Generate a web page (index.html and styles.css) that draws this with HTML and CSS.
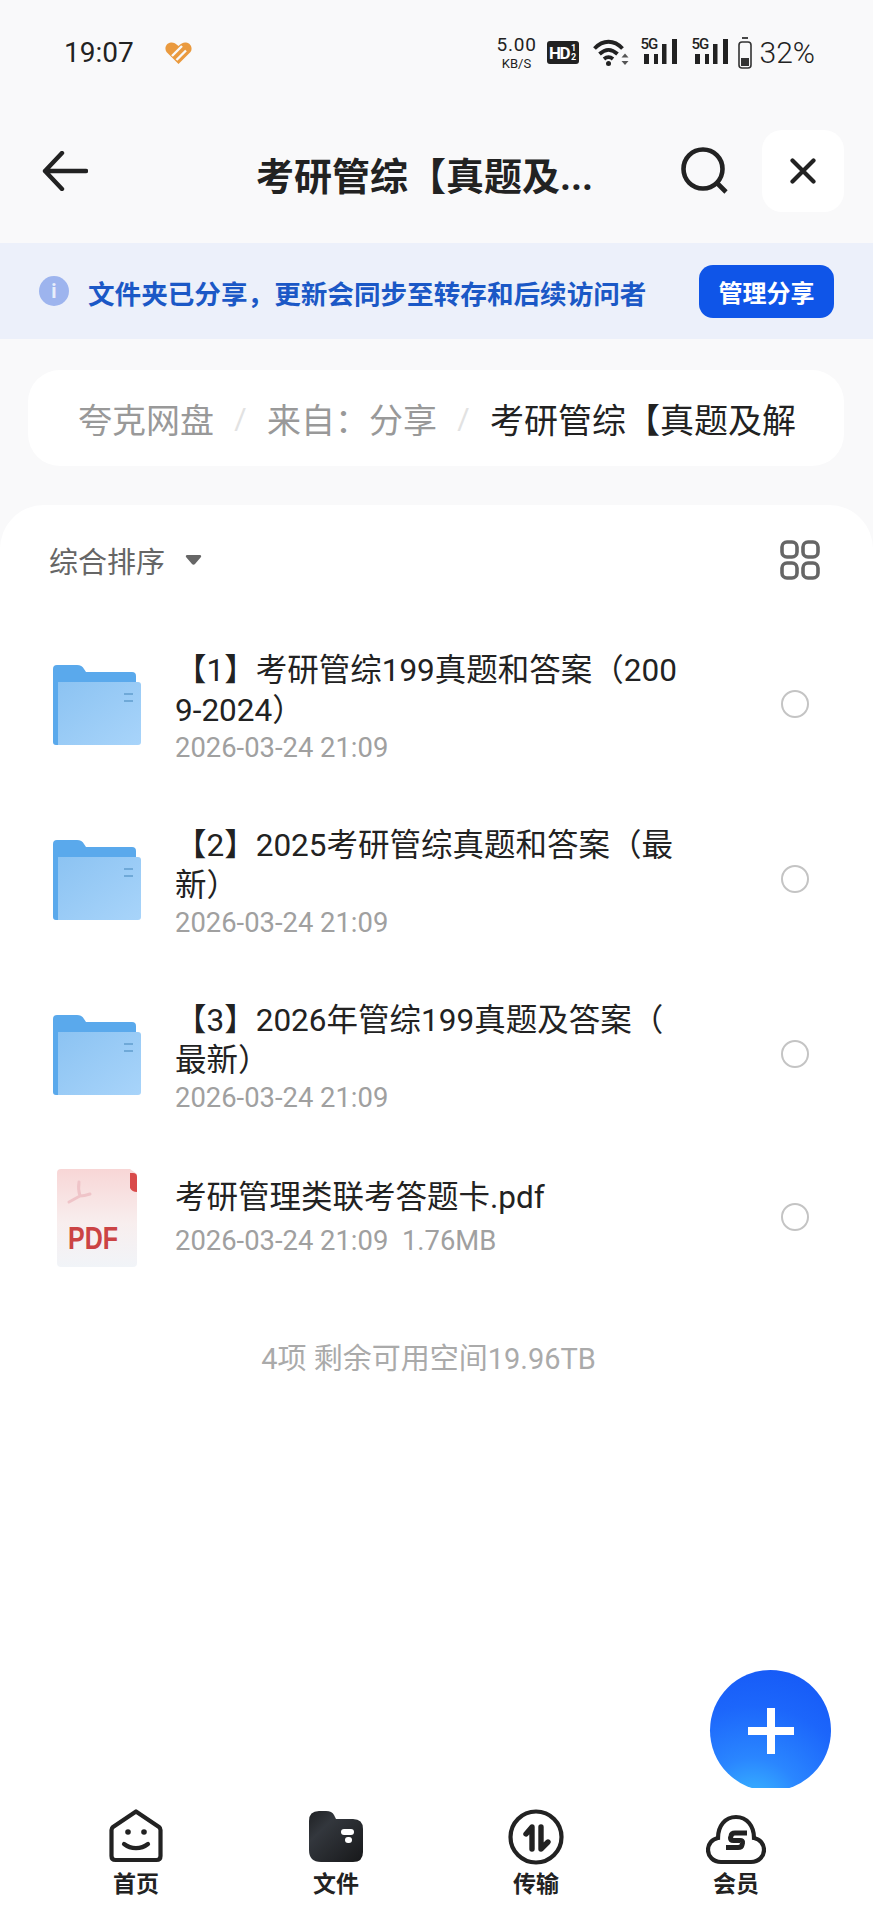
FILE: index.html

```html
<!DOCTYPE html>
<html lang="zh-CN">
<head>
  <meta charset="UTF-8">
  <meta name="viewport" content="width=device-width, initial-scale=1.0">
  <title>考研管综【真题及解</title>
  <link rel="stylesheet" href="styles.css">
</head>
<body>
  <div class="phone">
    <div class="statusbar">
      <div class="status-left">
        <span class="time">19:07</span>
        <svg class="heart" width="27" height="22" viewBox="0 0 27 22">
          <path d="M13.500 22L1.500 10C-1 6.500 1 1 6 .6c2.500-.2 4.500 .8 7.500 3.400C16 1.500 18.500 .2 21 .6c5 .6 7 6 4.500 9.400z" fill="#ea9a3e"/>
          <path d="M7 14L17 4M11.500 18L21 8.500" stroke="#f8f9fa" stroke-width="2.400"/>
        </svg>
      </div>
      <div class="status-right">
        <div class="speed"><span class="speed-num">5.00</span><span class="speed-unit">KB/S</span></div>
        <div class="hd">HD<span class="hd-sub">1<br>2</span></div>
        <svg class="wifi" width="36" height="27" viewBox="0 0 36 27">
          <path d="M1.500 9.500C10 .5 21 .5 29.500 9.500M6.500 15C12.500 9.500 18.500 9.500 24.500 15M11 20C14 17.500 17 17.500 20 20" fill="none" stroke="#222" stroke-width="3.800"/>
          <circle cx="15.500" cy="24.500" r="2.500" fill="#222"/>
          <path d="M32 14.500l3.500 4h-7zM32 26l3.500-4h-7z" fill="#555"/>
        </svg>
        <div class="signal">
          <span class="net">5G</span>
          <svg width="36" height="32" viewBox="0 0 36 32">
            <path d="M3 17h5v10H3zM13 17h4v10h-4zM21 7h4.500v20H21zM31 2h5v25h-5z" fill="#222"/>
          </svg>
        </div>
        <div class="signal">
          <span class="net">5G</span>
          <svg width="36" height="32" viewBox="0 0 36 32">
            <path d="M3 17h5v10H3zM13 17h4v10h-4zM21 7h4.500v20H21zM31 2h5v25h-5z" fill="#222"/>
          </svg>
        </div>
        <svg class="battery" width="14" height="32" viewBox="0 0 14 32">
          <path d="M4 1h6" stroke="#333" stroke-width="1.800"/>
          <rect x="1" y="5" width="12" height="26" rx="3" fill="none" stroke="#333" stroke-width="1.600"/>
          <rect x="3" y="21" width="8" height="8" fill="#333"/>
        </svg>
        <span class="percent">32%</span>
      </div>
    </div>

    <div class="header">
      <svg class="back" width="46" height="40" viewBox="0 0 46 40">
        <path d="M44 20H3M20 2L3 20l17 18" fill="none" stroke="#222" stroke-width="4.400" stroke-linecap="round" stroke-linejoin="round"/>
      </svg>
      <div class="title">考研管综【真题及...</div>
      <svg class="search" width="48" height="48" viewBox="0 0 48 48">
        <circle cx="22" cy="22" r="19.500" fill="none" stroke="#222" stroke-width="4.600"/>
        <path d="M36 36l9 9" stroke="#222" stroke-width="4.600"/>
      </svg>
      <div class="close">
        <svg width="26" height="26" viewBox="0 0 26 26">
          <path d="M2.500 2.500l21 21M23.500 2.500l-21 21" stroke="#222" stroke-width="4.200" stroke-linecap="round"/>
        </svg>
      </div>
    </div>

    <div class="notice">
      <div class="info">i</div>
      <div class="notice-text">文件夹已分享，更新会同步至转存和后续访问者</div>
      <button class="manage">管理分享</button>
    </div>

    <div class="crumbs">
      <span class="crumb">夸克网盘</span>
      <span class="sep">/</span>
      <span class="crumb">来自：分享</span>
      <span class="sep">/</span>
      <span class="crumb current">考研管综【真题及解</span>
    </div>

    <div class="sheet">
      <div class="sortbar">
        <span class="sort">综合排序</span>
        <svg class="caret" width="17" height="11" viewBox="0 0 17 11">
          <path d="M2 1h13c1 0 1.500 1 1 2l-6 7c-.8 1-2.200 1-3 0L1 3C.5 2 1 1 2 1z" fill="#666"/>
        </svg>
        <svg class="grid-toggle" width="40" height="40" viewBox="0 0 40 40">
          <g fill="none" stroke="#666" stroke-width="3.600">
            <rect x="2" y="2" width="15" height="15" rx="5"/>
            <rect x="23" y="2" width="15" height="15" rx="5"/>
            <rect x="2" y="23" width="15" height="15" rx="5"/>
            <rect x="23" y="23" width="15" height="15" rx="5"/>
          </g>
        </svg>
      </div>

      <div class="row">
        <svg class="folder" width="88" height="80" viewBox="0 0 88 80">
          <defs>
            <linearGradient id="front" x1="0" y1="0" x2="1" y2="1">
              <stop offset="0" stop-color="#8cc3f2"/>
              <stop offset="1" stop-color="#a8d4fa"/>
            </linearGradient>
          </defs>
          <path d="M0 4Q0 0 4 0H24Q29 0 31 4L33 7H79Q83 7 83 11V30H40V80H3Q0 80 0 77z" fill="#5aa9ec"/>
          <path d="M5 17H85Q88 17 88 20V77Q88 80 85 80H5z" fill="url(#front)"/>
          <path d="M71 29h9M71 36h9" stroke="#6fa9d8" stroke-width="2"/>
        </svg>
        <div class="meta">
          <div class="name">【1】考研管综199真题和答案（2009-2024）</div>
          <div class="date">2026-03-24 21:09</div>
        </div>
        <div class="radio"></div>
      </div>

      <div class="row">
        <svg class="folder" width="88" height="80" viewBox="0 0 88 80">
          <path d="M0 4Q0 0 4 0H24Q29 0 31 4L33 7H79Q83 7 83 11V30H40V80H3Q0 80 0 77z" fill="#5aa9ec"/>
          <path d="M5 17H85Q88 17 88 20V77Q88 80 85 80H5z" fill="url(#front)"/>
          <path d="M71 29h9M71 36h9" stroke="#6fa9d8" stroke-width="2"/>
        </svg>
        <div class="meta">
          <div class="name">【2】2025考研管综真题和答案（最新）</div>
          <div class="date">2026-03-24 21:09</div>
        </div>
        <div class="radio"></div>
      </div>

      <div class="row">
        <svg class="folder" width="88" height="80" viewBox="0 0 88 80">
          <path d="M0 4Q0 0 4 0H24Q29 0 31 4L33 7H79Q83 7 83 11V30H40V80H3Q0 80 0 77z" fill="#5aa9ec"/>
          <path d="M5 17H85Q88 17 88 20V77Q88 80 85 80H5z" fill="url(#front)"/>
          <path d="M71 29h9M71 36h9" stroke="#6fa9d8" stroke-width="2"/>
        </svg>
        <div class="meta">
          <div class="name">【3】2026年管综199真题及答案（最新）</div>
          <div class="date">2026-03-24 21:09</div>
        </div>
        <div class="radio"></div>
      </div>

      <div class="row row-single">
        <svg class="pdf" width="88" height="100" viewBox="0 0 88 100">
          <defs>
            <linearGradient id="paper" x1="0" y1="0" x2="0" y2="1">
              <stop offset="0" stop-color="#f8d6d6"/>
              <stop offset=".55" stop-color="#f8eeee"/>
              <stop offset="1" stop-color="#f1f4f8"/>
            </linearGradient>
          </defs>
          <path d="M5 1H74L81 6V95Q81 99 77 99H5Q1 99 1 95V5Q1 1 5 1z" fill="url(#paper)"/>
          <path d="M74 5H77Q81 5 81 9V24Q76 24 74 20z" fill="#d94a4a"/>
          <path d="M23 14C22 20 23 25 24 28M24 28C28 28 31 27 34 26M24 28C20 30 17 32 13 34" fill="none" stroke="#efc4c8" stroke-width="3" stroke-linecap="round"/>
          <text x="12" y="81" class="pdf-label" textLength="50" lengthAdjust="spacingAndGlyphs">PDF</text>
        </svg>
        <div class="meta">
          <div class="name">考研管理类联考答题卡.pdf</div>
          <div class="date">2026-03-24 21:09&nbsp;&nbsp;1.76MB</div>
        </div>
        <div class="radio"></div>
      </div>

      <div class="summary">4项 剩余可用空间19.96TB</div>
    </div>

    <div class="fab">
      <svg width="48" height="48" viewBox="0 0 48 48">
        <path d="M24 1v46M1 24h46" stroke="#fff" stroke-width="8"/>
      </svg>
    </div>

    <div class="tabbar">
      <div class="tab">
        <svg width="54" height="56" viewBox="0 0 54 56">
          <path d="M27 2.500L4 18c-1 .8-1.500 1.500-1.500 3v26q0 4 4 4h41q4 0 4-4V21c0-1.500-.5-2.200-1.500-3z" fill="none" stroke="#222" stroke-width="4.200" stroke-linejoin="round"/>
          <circle cx="19" cy="23" r="2.800" fill="#222"/>
          <circle cx="35" cy="23" r="2.800" fill="#222"/>
          <path d="M15 35c7 5.500 17 5.500 24 0" fill="none" stroke="#222" stroke-width="4.200" stroke-linecap="round"/>
        </svg>
        <span class="tab-label">首页</span>
      </div>
      <div class="tab">
        <svg width="54" height="56" viewBox="0 0 54 56">
          <defs>
            <linearGradient id="wallet" x1="0" y1="0" x2="1" y2="1">
              <stop offset="0" stop-color="#1f2124"/>
              <stop offset=".3" stop-color="#33373d"/>
              <stop offset="1" stop-color="#17181a"/>
            </linearGradient>
          </defs>
          <path d="M0 12Q0 2 10 2H17Q23 2 25 6L27 10H44Q54 10 54 20V43Q54 53 44 53H12Q0 53 0 41z" fill="url(#wallet)"/>
          <rect x="32" y="20" width="13" height="6" rx="3" fill="#fff"/>
          <rect x="36" y="28" width="7" height="6" rx="3" fill="#fff"/>
        </svg>
        <span class="tab-label">文件</span>
      </div>
      <div class="tab">
        <svg width="56" height="56" viewBox="0 0 56 56">
          <circle cx="28" cy="28" r="25.500" fill="none" stroke="#222" stroke-width="4.200"/>
          <path d="M24 40V18L18 25M33 18V40L40 33" fill="none" stroke="#222" stroke-width="5.400" stroke-linecap="round" stroke-linejoin="round"/>
        </svg>
        <span class="tab-label">传输</span>
      </div>
      <div class="tab">
        <svg width="60" height="56" viewBox="0 0 60 56">
          <path d="M15 53C7 53 2 47 2 41C2 35 6 30 12 29C12 17 19 8 30 8C41 8 48 17 48 29C54 30 58 35 58 41C58 47 53 53 45 53z" fill="none" stroke="#222" stroke-width="4.200"/>
          <path d="M41 24H29Q25.500 24 25 27L24.500 29Q24.500 31.500 27.500 31.500H34Q37 31.500 36.500 34L36 36Q35.500 38.500 32 38.500H20" fill="none" stroke="#222" stroke-width="5"/>
        </svg>
        <span class="tab-label">会员</span>
      </div>
    </div>
  </div>
</body>
</html>
```

FILE: styles.css

```css
* {
  box-sizing: border-box;
}
body {
  margin: 0;
  background-color: #fff;
  font-family: Roboto, "Noto Sans CJK SC", sans-serif;
  color: #222;
}
.phone {
  position: relative;
  width: 873px;
  height: 1920px;
  overflow: hidden;
  display: flex;
  flex-direction: column;
  background-color: #f9f9fa;
}

/* status bar */
.statusbar {
  height: 105px;
  flex: none;
  display: flex;
  align-items: center;
  justify-content: space-between;
  padding: 0 58px 0 64px;
}
.status-left {
  display: flex;
  align-items: center;
  gap: 31px;
}
.time {
  font-size: 28px;
  color: #222;
}
.status-right {
  display: flex;
  align-items: center;
}
.speed {
  display: flex;
  flex-direction: column;
  align-items: center;
  width: 42px;
  color: #222;
  line-height: 1;
}
.speed-num {
  font-size: 19px;
  line-height: 21px;
  letter-spacing: .8px;
}
.speed-unit {
  font-size: 13px;
  line-height: 17px;
}
.hd {
  display: flex;
  align-items: center;
  justify-content: center;
  width: 32px;
  height: 23px;
  margin-left: 9px;
  border-radius: 3px;
  background-color: #222;
  color: #fff;
  font-size: 17px;
  font-weight: 700;
  letter-spacing: -1.500px;
}
.hd-sub {
  font-size: 9px;
  line-height: 9px;
  margin-left: 2px;
  letter-spacing: 0;
}
.wifi {
  margin-left: 14px;
}
.signal {
  position: relative;
  width: 36px;
  height: 32px;
  margin-left: 12px;
}
.signal + .signal {
  margin-left: 15px;
}
.signal svg {
  display: block;
}
.net {
  position: absolute;
  top: 0;
  left: 0;
  font-size: 15px;
  font-weight: 500;
  letter-spacing: -1px;
  line-height: 14px;
}
.battery {
  margin-left: 10px;
}
.percent {
  margin-left: 8px;
  font-size: 30px;
  font-weight: 300;
  color: #222;
}

/* header */
.header {
  height: 138px;
  flex: none;
  display: flex;
  align-items: center;
  padding: 0 29px 6px 42px;
}
.back {
  flex: none;
}
.title {
  width: 340px;
  margin-left: 168px;
  margin-top: 4px;
  font-size: 38px;
  font-weight: 700;
  white-space: nowrap;
}
.search {
  flex: none;
  margin-left: 85px;
}
.close {
  width: 82px;
  height: 82px;
  margin-left: 33px;
  display: flex;
  align-items: center;
  justify-content: center;
  background-color: #fff;
  border-radius: 20px;
}

/* shared notice */
.notice {
  height: 96px;
  flex: none;
  display: flex;
  align-items: center;
  padding: 0 39px 0 39px;
  background-color: #ecf0fa;
}
.info {
  width: 30px;
  height: 30px;
  flex: none;
  border-radius: 50%;
  background-color: #9db4ee;
  color: #e8eefb;
  font-size: 20px;
  font-weight: 700;
  line-height: 30px;
  text-align: center;
}
.notice-text {
  margin-left: 19px;
  margin-top: 2px;
  font-size: 26.600px;
  font-weight: 700;
  color: #1b58c6;
  white-space: nowrap;
}
.manage {
  width: 135px;
  height: 53px;
  margin-left: auto;
  padding: 0;
  border: none;
  border-radius: 14px;
  background-color: #0f55e8;
  color: #fff;
  font-family: inherit;
  font-size: 24px;
  font-weight: 700;
}

/* breadcrumb */
.crumbs {
  height: 96px;
  flex: none;
  margin: 31px 29px 0 28px;
  display: flex;
  align-items: center;
  padding-left: 50px;
  background-color: #fff;
  border-radius: 32px;
  white-space: nowrap;
}
.crumb {
  font-size: 34px;
  color: #999;
}
.crumb.current {
  color: #222;
}
.sep {
  width: 53px;
  text-align: center;
  font-size: 30px;
  color: #e2e2e2;
}

/* file list */
.sheet {
  flex: 1;
  margin-top: 39px;
  background-color: #fff;
  border-radius: 44px 44px 0 0;
}
.sortbar {
  height: 111px;
  display: flex;
  align-items: center;
  padding: 0 53px 2px 49px;
}
.sort {
  font-size: 29px;
  color: #666;
}
.caret {
  margin-left: 20px;
}
.grid-toggle {
  margin-left: auto;
}
.row {
  height: 175px;
  display: flex;
  align-items: center;
  padding: 0 64px 0 53px;
}
.row-single {
  height: 152px;
}
.folder {
  flex: none;
  margin-top: 2px;
}
.pdf {
  flex: none;
  margin-left: 3px;
  margin-right: -3px;
  margin-top: 2px;
}
.pdf-label {
  font-family: "Liberation Sans", sans-serif;
  font-size: 31px;
  font-weight: 700;
  fill: #cb4344;
}
.meta {
  width: 510px;
  margin-left: 34px;
  margin-top: 8px;
  word-break: break-all;
  line-break: anywhere;
}
.row-single .meta {
  margin-top: 2px;
}
.name {
  font-size: 31.500px;
  line-height: 40px;
  color: #222;
}
.date {
  font-size: 27.400px;
  line-height: 34px;
  color: #a0a0a0;
}
.row-single .date {
  margin-top: 6px;
}
.radio {
  width: 28px;
  height: 28px;
  flex: none;
  margin-left: auto;
  border: 2px solid #c4c4c4;
  border-radius: 50%;
}
.summary {
  margin-top: 49px;
  padding-right: 16px;
  text-align: center;
  font-size: 29px;
  line-height: 34px;
  color: #aaa;
}

/* floating button */
.fab {
  position: absolute;
  top: 1670px;
  left: 710px;
  width: 121px;
  height: 121px;
  display: flex;
  align-items: center;
  justify-content: center;
  border-radius: 50%;
  background: radial-gradient(circle at 35% 115%, #3cc0ff 0, #2a86ff 32%, #1c66fb 65%, #1456f5 100%);
}

/* tab bar */
.tabbar {
  position: relative;
  height: 132px;
  flex: none;
  display: grid;
  grid-template-columns: repeat(4, 200px);
  padding: 21px 0 0 36px;
  background-color: #fff;
}
.tab {
  display: flex;
  flex-direction: column;
  align-items: center;
}
.tab svg {
  flex: none;
}
.tab-label {
  margin-top: 6px;
  font-size: 23px;
  font-weight: 700;
  line-height: 28px;
  color: #222;
}
```
